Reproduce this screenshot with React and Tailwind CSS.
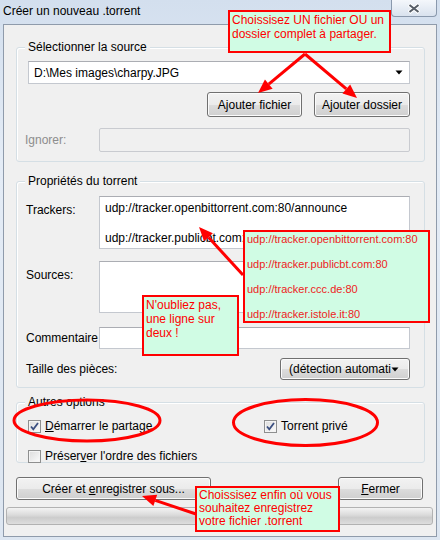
import React from 'react';

const btn =
  'flex items-center justify-center rounded-[3px] border border-[#707070] bg-[linear-gradient(#f2f2f2_0%,#ebebeb_50%,#dddddd_50%,#cfcfcf_100%)] shadow-[inset_0_0_0_1px_#fbfbfb]';
const box = 'border border-[#c4c8cf] border-t-[#abadb3] bg-white';

function Arrow({ x1, y1, x2, y2 }) {
  const a = Math.atan2(y2 - y1, x2 - x1);
  const len = 14;
  const w = 6;
  const bx = x2 - len * Math.cos(a);
  const by = y2 - len * Math.sin(a);
  const px = -Math.sin(a) * w;
  const py = Math.cos(a) * w;
  return (
    <g>
      <line x1={x1} y1={y1} x2={bx} y2={by} stroke="#ff0000" strokeWidth="3" />
      <polygon points={`${x2},${y2} ${bx + px},${by + py} ${bx - px},${by - py}`} fill="#ff0000" />
    </g>
  );
}

function Check({ checked }) {
  return (
    <div className="flex h-[13px] w-[13px] items-center justify-center border border-[#8e8f8f] bg-[linear-gradient(135deg,#dcdcdc,#fbfbfb)] shadow-[inset_0_0_0_1px_#f4f4f4]">
      {checked && (
        <svg width="11" height="11" viewBox="0 0 11 11">
          <path d="M2 5.5 L4.3 8.3 L9 2" fill="none" stroke="#3b4f80" strokeWidth="1.8" />
        </svg>
      )}
    </div>
  );
}

function Arrowhead() {
  return (
    <svg width="8" height="5" viewBox="0 0 8 5">
      <path d="M0.5 0.5 H7.5 L4 4.5 Z" fill="#000" />
    </svg>
  );
}

function Group({ title, className, children }) {
  return (
    <div className={`relative ml-[12px] w-[409px] rounded-[3px] border border-[#d5dfe5] shadow-[inset_1px_1px_0_#fff] ${className}`}>
      <span className="absolute left-[8px] top-[-9px] bg-[#f0f0f0] px-[3px] leading-[16px]">{title}</span>
      {children}
    </div>
  );
}

export default function App() {
  return (
    <div className="relative h-[540px] w-[440px] overflow-hidden bg-[linear-gradient(#d3dfee,#e4ecf6_30%,#dde6f1)] font-['Liberation_Sans',Arial,sans-serif] text-[12px] text-black">
      {/* Title bar */}
      <div className="flex h-[24px] items-center pl-[3px] pb-[2px]">Créer un nouveau .torrent</div>
      <div className="absolute right-[3px] top-0 flex h-[17px] w-[46px] items-center justify-center rounded-b-[4px] border border-t-0 border-[#8a99ad] bg-[linear-gradient(#f4f7fb,#d9e2ee)]">
        <svg width="14" height="11" viewBox="0 0 14 11">
          <path d="M2 1.5 L12 9.5 M12 1.5 L2 9.5" stroke="#fff" strokeWidth="4" />
          <path d="M2.5 2 L11.5 9 M11.5 2 L2.5 9" stroke="#565d66" strokeWidth="2" />
        </svg>
      </div>

      {/* Client area */}
      <div className="mx-[3px] flex h-[513px] flex-col border border-[#8f9bab] bg-[#f0f0f0] pt-[22px]">
        <Group title="Sélectionner la source" className="h-[115px]">
          <div className={`ml-[11px] mt-[13px] flex h-[23px] w-[382px] items-center justify-between pl-[5px] pr-[6px] ${box}`}>
            <span>D:\Mes images\charpy.JPG</span>
            <Arrowhead />
          </div>
          <div className="mt-[8px] flex justify-end gap-[12px] pr-[14px]">
            <div className={`h-[25px] w-[95px] ${btn}`}>Ajouter fichier</div>
            <div className={`h-[25px] w-[96px] ${btn}`}>Ajouter dossier</div>
          </div>
          <div className="mt-[11px] flex items-center">
            <span className="ml-[8px] w-[74px] text-[#8d8d8d]">Ignorer:</span>
            <div className="h-[24px] w-[311px] rounded-[2px] border border-[#c9cbd0] bg-[#f0f0f0]" />
          </div>
        </Group>

        <Group title="Propriétés du torrent" className="mt-[19px] h-[207px]">
          <div className="ml-[9px] mt-[14px] flex">
            <span className="w-[73px] pt-[5px]">Trackers:</span>
            <div className={`h-[53px] w-[311px] pl-[5px] pt-[4px] leading-[15px] ${box}`}>
              <div>udp://tracker.openbittorrent.com:80/announce</div>
              <div>&nbsp;</div>
              <div>udp://tracker.publicbt.com:80/announce</div>
            </div>
          </div>
          <div className="ml-[9px] mt-[12px] flex">
            <span className="w-[73px] pt-[5px]">Sources:</span>
            <div className={`h-[52px] w-[311px] ${box}`} />
          </div>
          <div className="ml-[9px] mt-[14px] flex items-center">
            <span className="w-[73px]">Commentaire</span>
            <div className={`h-[22px] w-[311px] ${box}`} />
          </div>
          <div className="ml-[9px] mt-[9px] flex items-center justify-between pr-[14px]">
            <span>Taille des pièces:</span>
            <div className={`h-[22px] w-[130px] justify-between pl-[4px] pr-[6px] ${btn}`}>
              <span className="whitespace-nowrap">(détection automati</span>
              <Arrowhead />
            </div>
          </div>
        </Group>

        <Group title="Autres options" className="mt-[14px] h-[61px]">
          <div className="ml-[11px] mt-[14px] flex items-center">
            <Check checked />
            <span className="ml-[4px] w-[219px]">
              <span className="underline">D</span>émarrer le partage
            </span>
            <Check checked />
            <span className="ml-[4px]">
              Torrent <span className="underline">p</span>rivé
            </span>
          </div>
          <div className="ml-[11px] mt-[12px] flex items-center">
            <Check />
            <span className="ml-[4px]">
              Préser<span className="underline">v</span>er l'ordre des fichiers
            </span>
          </div>
        </Group>

        <div className="ml-[12px] mt-[14px] flex w-[407px] justify-between">
          <div className={`h-[23px] w-[195px] ${btn}`}>
            <span>
              Créer et <span className="underline">e</span>nregistrer sous...
            </span>
          </div>
          <div className={`h-[23px] w-[85px] ${btn}`}>
            <span>
              <span className="underline">F</span>ermer
            </span>
          </div>
        </div>

        <div className="ml-[2px] mt-[7px] h-[18px] w-[427px] rounded-[3px] border border-[#b2b2b2] bg-[linear-gradient(#f3f3f3,#dadada_45%,#cccccc_60%,#dedede)]" />
      </div>

      {/* Annotations */}
      <svg className="pointer-events-none absolute left-0 top-0" width="440" height="540">
        <Arrow x1={305} y1={54} x2={258} y2={93} />
        <Arrow x1={305} y1={54} x2={357} y2={98} />
        <Arrow x1={243} y1={275} x2={199} y2={227} />
        <Arrow x1={196} y1={514} x2={142} y2={496} />
        <ellipse cx="87" cy="420.5" rx="73" ry="20.5" fill="none" stroke="#ff0000" strokeWidth="3" />
        <ellipse cx="305.5" cy="422.5" rx="72" ry="23" fill="none" stroke="#ff0000" strokeWidth="3" />
      </svg>

      <div className="absolute left-[228px] top-[10px] h-[43px] w-[163px] border-2 border-[#ff0000] bg-[#d0fce4] pl-[2px] pt-[1px] leading-[14px] text-[#ff0000]">
        Choissisez UN fichier OU un
        <br />
        dossier complet à partager.
      </div>

      <div className="absolute left-[243px] top-[230px] flex h-[93px] w-[187px] flex-col gap-[11px] border-2 border-[#ff0000] bg-[#d0fce4] pl-[2px] text-[11px] leading-[14px] text-[#ee2222]">
        <div>udp://tracker.openbittorrent.com:80</div>
        <div>udp://tracker.publicbt.com:80</div>
        <div>udp://tracker.ccc.de:80</div>
        <div>udp://tracker.istole.it:80</div>
      </div>

      <div className="absolute left-[142px] top-[295px] h-[61px] w-[97px] border-2 border-[#ff0000] bg-[#d0fce4] pl-[2px] pt-[1px] leading-[14px] text-[#ff0000]">
        N'oubliez pas,
        <br />
        une ligne sur
        <br />
        deux !
      </div>

      <div className="absolute left-[195px] top-[486px] h-[46px] w-[145px] border-2 border-[#ff0000] bg-[#d0fce4] pl-[2px] pt-[1px] leading-[13px] text-[#ff0000]">
        Choissisez enfin où vous
        <br />
        souhaitez enregistrez
        <br />
        votre fichier .torrent
      </div>
    </div>
  );
}
